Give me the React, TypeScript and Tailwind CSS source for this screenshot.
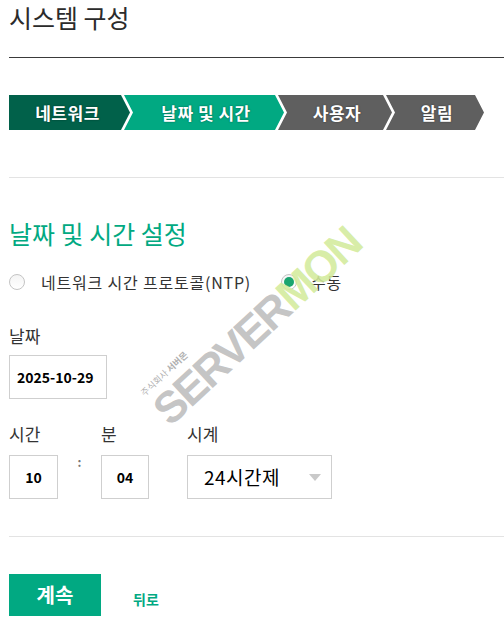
const font = "[font-family:'Noto_Sans_CJK_KR','Noto_Sans',sans-serif]";

const steps = [
  { label: "네트워크", w: "w-[121px]", bg: "bg-[#01614a]", first: true },
  { label: "날짜 및 시간", w: "w-[160px]", bg: "bg-[#01a982]" },
  { label: "사용자", w: "w-[114px]", bg: "bg-[#5f5f5f]" },
  { label: "알림", w: "w-[98px]", bg: "bg-[#5f5f5f]" },
];

const StepBar = () => (
  <div className="mt-[37px] flex h-[35px]">
    {steps.map((s, i) => (
      <div
        key={s.label}
        className={`${s.w} ${s.bg} ${
          s.first
            ? "[clip-path:polygon(0_0,calc(100%-9px)_0,100%_50%,calc(100%-9px)_100%,0_100%)]"
            : "-ml-[6px] [clip-path:polygon(0_0,calc(100%-9px)_0,100%_50%,calc(100%-9px)_100%,0_100%,9px_50%)]"
        } flex items-center justify-center text-[17px] font-bold tracking-[0.5px] text-white [text-shadow:0_0_2px_rgba(0,0,0,0.45)] ${
          i > 0 ? "pl-[4px]" : "pr-[4px]"
        }`}
      >
        {s.label}
      </div>
    ))}
  </div>
);

const Radio = ({ checked }: { checked?: boolean }) => (
  <span className="flex h-[16px] w-[16px] items-center justify-center rounded-full border border-[#c4c4c4] bg-gradient-to-b from-[#f4f4f4] to-white">
    {checked && <span className="h-[10px] w-[10px] rounded-full bg-[#1aa56f]" />}
  </span>
);

const Box = ({ w, children, center }: { w: string; children: React.ReactNode; center?: boolean }) => (
  <div
    className={`${w} flex h-[44px] items-center border border-[#cfcfcf] text-[14px] font-semibold text-black ${
      center ? "justify-center" : "pl-[7px]"
    }`}
  >
    {children}
  </div>
);

const Watermark = () => (
  <div className="pointer-events-none absolute left-[257px] top-[326px] -translate-x-1/2 -translate-y-1/2 -rotate-[43deg]">
    <div className="relative whitespace-nowrap text-[44px] font-black leading-none tracking-[-2px] [font-family:'Liberation_Sans',Arial,sans-serif]">
      <span className="text-[#bdbdbd]/90">SERVER</span>
      <span className="text-[#d3eb9c]/90">MON</span>
      <span className={`absolute -top-[11px] left-[2px] text-[9px] font-normal tracking-normal text-[#b0b0b0] ${font}`}>
        주식회사 <b>서버몬</b>
      </span>
    </div>
  </div>
);

export default function App() {
  return (
    <div className={`relative h-[640px] w-[504px] overflow-hidden bg-white pl-[9px] text-[#333] ${font}`}>
      <div className="h-[58px] border-b border-[#3a3a3a]">
        <h1 className="text-[25px] leading-[34px] text-[#2b2b2b]">시스템 구성</h1>
      </div>

      <StepBar />

      <div className="mt-[47px] border-t border-[#e3e3e3]" />

      <h2 className="mt-[38px] text-[25px] leading-[34px] text-[#01a982]">날짜 및 시간 설정</h2>

      <div className="mt-[20px] flex h-[24px] items-center text-[16px] tracking-[0.8px] text-[#333]">
        <Radio />
        <span className="ml-[16px]">네트워크 시간 프로토콜(NTP)</span>
        <span className="ml-[30px]">
          <Radio checked />
        </span>
        <span className="ml-[14px]">수동</span>
      </div>

      <div className="mt-[30px] text-[17px] leading-[24px]">날짜</div>
      <div className="mt-[7px]">
        <Box w="w-[98px]">2025-10-29</Box>
      </div>

      <div className="mt-[23px] flex text-[17px] leading-[24px]">
        <div className="w-[49px]">
          <div>시간</div>
          <div className="mt-[9px]">
            <Box w="w-[49px]" center>10</Box>
          </div>
        </div>
        <div className="w-[43px] pt-[28px] text-center text-[12px] font-bold text-[#777]">:</div>
        <div className="w-[48px]">
          <div>분</div>
          <div className="mt-[9px]">
            <Box w="w-[48px]" center>04</Box>
          </div>
        </div>
        <div className="ml-[38px] w-[145px]">
          <div>시계</div>
          <div className="mt-[9px] flex h-[44px] w-[145px] items-center justify-between border border-[#cfcfcf] pl-[16px] pr-[10px] text-[19px] tracking-[0.5px] text-black">
            <span>24시간제</span>
            <svg width="12" height="7" viewBox="0 0 12 7">
              <path d="M0 0H12L6 7Z" fill="#c9c9c9" />
            </svg>
          </div>
        </div>
      </div>

      <div className="mt-[37px] border-t border-[#e3e3e3]" />

      <div className="mt-[37px] flex items-center">
        <button className="h-[42px] w-[92px] bg-[#01a982] text-[20px] font-bold text-white">계속</button>
        <span className="ml-[32px] mt-[8px] text-[14px] font-semibold text-[#01a982]">뒤로</span>
      </div>

      <Watermark />
    </div>
  );
}
